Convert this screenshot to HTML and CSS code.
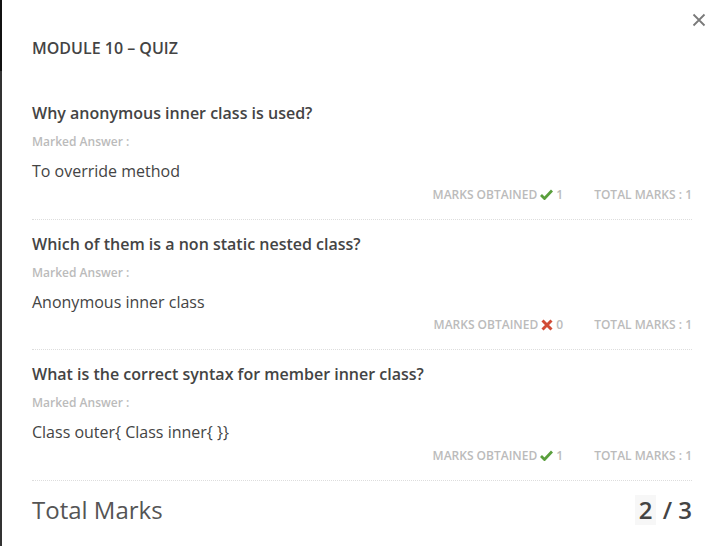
FILE: index.html
```html
<!DOCTYPE html>
<html>
<head>
<meta charset="utf-8">
<link rel="stylesheet" href="styles.css">
</head>
<body>
<div class="edge"></div>
<div class="modal">
  <button class="close" aria-label="Close">
    <svg width="14" height="14" viewBox="0 0 14 14"><path d="M1.5 1.5L12.5 12.5M12.5 1.5L1.5 12.5" stroke="#7a7a7a" stroke-width="1.8" fill="none"/></svg>
  </button>
  <h1 class="title">MODULE 10 – QUIZ</h1>

  <div class="question">
    <h2 class="q-text">Why anonymous inner class is used?</h2>
    <div class="label">Marked Answer :</div>
    <div class="answer">To override method</div>
    <div class="marks">
      <span class="obtained">MARKS OBTAINED
        <svg class="icon" width="13" height="11" viewBox="0 0 13 11"><path d="M1 6L4.5 9.5L12 1.5" stroke="#5a9f3d" stroke-width="2.8" fill="none"/></svg>
        1</span>
      <span class="total">TOTAL MARKS : 1</span>
    </div>
  </div>

  <div class="question">
    <h2 class="q-text">Which of them is a non static nested class?</h2>
    <div class="label">Marked Answer :</div>
    <div class="answer">Anonymous inner class</div>
    <div class="marks">
      <span class="obtained">MARKS OBTAINED
        <svg class="icon" width="12" height="12" viewBox="0 0 12 12"><path d="M1.5 1.5L10.5 10.5M10.5 1.5L1.5 10.5" stroke="#d14b36" stroke-width="3" fill="none"/></svg>
        0</span>
      <span class="total">TOTAL MARKS : 1</span>
    </div>
  </div>

  <div class="question">
    <h2 class="q-text">What is the correct syntax for member inner class?</h2>
    <div class="label">Marked Answer :</div>
    <div class="answer">Class outer{ Class inner{ }}</div>
    <div class="marks">
      <span class="obtained">MARKS OBTAINED
        <svg class="icon" width="13" height="11" viewBox="0 0 13 11"><path d="M1 6L4.5 9.5L12 1.5" stroke="#5a9f3d" stroke-width="2.8" fill="none"/></svg>
        1</span>
      <span class="total">TOTAL MARKS : 1</span>
    </div>
  </div>

  <div class="total-row">
    <span class="total-label">Total Marks</span>
    <span class="score"><span class="got">2</span> / 3</span>
  </div>
</div>
</body>
</html>
```
FILE: styles.css
```css
html, body {
  margin: 0;
  padding: 0;
  height: 100%;
}
body {
  display: flex;
  background: #fff;
  font-family: "Open Sans", "Liberation Sans", sans-serif;
  color: #444;
}
.edge {
  width: 2px;
  flex: none;
  background: linear-gradient(#111 0, #111 71px, #333 71px, #333 100%);
}
.modal {
  position: relative;
  flex: 1;
  padding: 0 25px 0 30px;
}
.close {
  position: absolute;
  top: 12px;
  right: 10px;
  border: 0;
  background: none;
  padding: 0;
  width: 16px;
  height: 16px;
  display: flex;
  align-items: center;
  justify-content: center;
}
.title {
  margin: 0;
  padding-top: 37px;
  font-size: 16px;
  font-weight: 600;
  line-height: 22px;
  color: #444;
}
.question {
  border-bottom: 1px dotted #ddd;
  padding-bottom: 16px;
}
.q-text {
  margin: 0;
  padding-top: 43px;
  font-size: 16px;
  font-weight: 600;
  line-height: 22px;
  color: #444;
}
.question + .question .q-text {
  padding-top: 13px;
}
.label {
  margin-top: 10px;
  font-size: 12px;
  font-weight: 600;
  line-height: 16px;
  color: #bbb;
}
.answer {
  margin-top: 10px;
  font-size: 16px;
  line-height: 22px;
  color: #444;
}
.marks {
  display: flex;
  justify-content: flex-end;
  gap: 31px;
  margin-top: 4.5px;
  font-size: 12px;
  font-weight: 600;
  line-height: 16px;
  color: #bbb;
}
.obtained {
  display: flex;
  align-items: center;
  gap: 3px;
}
.icon {
  display: block;
}
.total-row {
  display: flex;
  justify-content: space-between;
  align-items: center;
  padding-top: 14px;
}
.total-label {
  font-size: 24px;
  line-height: 30px;
  color: #555;
}
.score {
  font-size: 24px;
  line-height: 30px;
  color: #444;
  font-weight: 600;
}
.got {
  display: inline-block;
  background: #f7f7f7;
  padding: 0 4px;
}
```
